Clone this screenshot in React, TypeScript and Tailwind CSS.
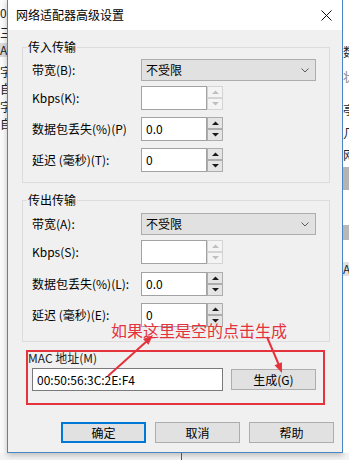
import React from "react";

const RED = "#e4333d";

function Arrow({ dir, disabled }: { dir: "up" | "down"; disabled?: boolean }) {
  const pts = dir === "up" ? "0,4 3.5,0.5 7,4" : "0,0 3.5,3.5 7,0";
  return (
    <svg width="7" height="4" viewBox="0 0 7 4">
      <polygon points={pts} fill={disabled ? "#bfbfbf" : "#1a1a1a"} />
    </svg>
  );
}

function SpinBox({ value, disabled }: { value: string; disabled?: boolean }) {
  const btn = disabled
    ? "flex-1 flex items-center justify-center bg-[#f4f4f4] border border-[#d4d4d4]"
    : "flex-1 flex items-center justify-center bg-[#e5e5e5] border border-[#adadad]";
  return (
    <div className="flex h-[24px] w-[82px]">
      <div className="w-[66px] h-full bg-white border border-[#a2a2a2] flex items-center pl-[4px] text-[12px] leading-[14px] text-black">
        {value}
      </div>
      <div className="w-[16px] h-full flex flex-col">
        <div className={btn}>
          <Arrow dir="up" disabled={disabled} />
        </div>
        <div className={btn}>
          <Arrow dir="down" disabled={disabled} />
        </div>
      </div>
    </div>
  );
}

function Select() {
  return (
    <div className="h-[22px] w-[175px] bg-[#e1e1e1] border border-[#adadad] flex items-center justify-between pl-[4px] pr-[6px]">
      <span className="text-[12px] leading-[14px] text-black">不受限</span>
      <svg width="8" height="5" viewBox="0 0 8 5">
        <polyline points="0.5,0.5 4,4 7.5,0.5" fill="none" stroke="#5a5a5a" strokeWidth="1" />
      </svg>
    </div>
  );
}

function Row({ label, children, mt }: { label: string; children: React.ReactNode; mt: string }) {
  return (
    <div className={`flex items-center ${mt}`}>
      <span className="w-[109px] text-[12px] leading-[14px] text-black whitespace-nowrap">{label}</span>
      {children}
    </div>
  );
}

function Button({ label, primary, w }: { label: string; primary?: boolean; w: string }) {
  return (
    <div
      className={`${w} h-[21px] flex items-center justify-center bg-[#e1e1e1] text-[12px] leading-[14px] text-black ${
        primary ? "border-2 border-[#0078d7]" : "border border-[#adadad]"
      }`}
    >
      {label}
    </div>
  );
}

export default function App() {
  return (
    <div className="relative w-[349px] h-[460px] overflow-hidden bg-white font-['Noto_Sans_CJK_SC',sans-serif] text-black">
      <div className="flex h-[453px]">
        {/* desktop behind, left */}
        <div className="w-[7px] h-full bg-[#fbfbfb] overflow-hidden text-[12px] leading-[14px] text-[#222] whitespace-nowrap">
          <div className="h-[14px] mt-[6px]">0</div>
          <div className="h-[14px] mt-[6px]">三</div>
          <div className="h-[14px] mt-[3px] bg-[#dadada]">A</div>
          <div className="h-[14px] mt-[8px]">字</div>
          <div className="h-[14px] mt-[3px]">自</div>
          <div className="h-[14px] mt-[4px]">字</div>
          <div className="h-[14px] mt-[3px]">自</div>
        </div>

        {/* dialog */}
        <div className="w-[336px] h-full flex flex-col bg-[#f0f0f0] border-x border-b border-[#4a86c5] shadow-[0_2px_6px_rgba(0,0,0,0.25)]">
          <div className="h-[30px] bg-white flex items-center justify-between pl-[8px] pr-[10px]">
            <span className="text-[12px] leading-[14px]">网络适配器高级设置</span>
            <svg width="11" height="11" viewBox="0 0 11 11">
              <path d="M0.5 0.5 L10.5 10.5 M10.5 0.5 L0.5 10.5" stroke="#111" strokeWidth="1" />
            </svg>
          </div>

          <div className="flex flex-col pl-[14px] pr-[12px] pt-[10px]">
            <fieldset className="border border-[#dcdcdc] pl-[9px] pr-[12px] pt-[5px] pb-[10px]">
              <legend className="-ml-[5px] px-[1px] text-[12px] leading-[14px]">传入传输</legend>
              <Row label="带宽(B):" mt="mt-0">
                <Select />
              </Row>
              <Row label="Kbps(K):" mt="mt-[5px]">
                <SpinBox value="" disabled />
              </Row>
              <Row label="数据包丢失(%)(P)" mt="mt-[7px]">
                <SpinBox value="0.0" />
              </Row>
              <Row label="延迟 (毫秒)(T):" mt="mt-[7px]">
                <SpinBox value="0" />
              </Row>
            </fieldset>

            <fieldset className="mt-[10px] border border-[#dcdcdc] pl-[9px] pr-[12px] pt-[6px] pb-[14px]">
              <legend className="-ml-[5px] px-[1px] text-[12px] leading-[14px]">传出传输</legend>
              <Row label="带宽(A):" mt="mt-0">
                <Select />
              </Row>
              <Row label="Kbps(S):" mt="mt-[5px]">
                <SpinBox value="" disabled />
              </Row>
              <Row label="数据包丢失(%)(L):" mt="mt-[8px]">
                <SpinBox value="0.0" />
              </Row>
              <Row label="延迟 (毫秒)(E):" mt="mt-[7px]">
                <SpinBox value="0" />
              </Row>
            </fieldset>

            {/* MAC group, outlined in red */}
            <div className="mt-[8px] ml-[4px] w-[299px] border-2 border-[#e4333d] flex flex-col pb-[12px]">
              <span className="text-[12px] leading-[12px] text-[#222]">MAC 地址(M)</span>
              <div className="mt-[4px] ml-[4px] flex items-center">
                <div className="w-[191px] h-[23px] bg-white border border-[#7a7a7a] flex items-center pl-[4px] text-[12px] leading-[14px]">
                  00:50:56:3C:2E:F4
                </div>
                <div className="ml-[8px]">
                  <Button label="生成(G)" w="w-[85px]" />
                </div>
              </div>
            </div>

            <div className="mt-[17px] -mr-[4px] flex justify-end gap-[9px]">
              <Button label="确定" primary w="w-[85px]" />
              <Button label="取消" w="w-[85px]" />
              <Button label="帮助" w="w-[85px]" />
            </div>
          </div>
        </div>

        {/* desktop behind, right */}
        <div className="w-[6px] h-full bg-white overflow-hidden text-[12px] leading-[14px] text-[#222] whitespace-nowrap">
          <div className="h-[14px] mt-[45px]">数</div>
          <div className="h-[14px] mt-[11px] text-[#888]">状</div>
          <div className="h-[14px] mt-[19px]">亭</div>
          <div className="h-[14px] mt-[9px]">几</div>
          <div className="h-[14px] mt-[8px]">网</div>
          <div className="h-[23px] mt-[5px] bg-[#b4b4b4]" />
          <div className="h-[15px] mt-[35px] bg-[#b8b8b8]" />
          <div className="h-[14px] mt-[22px] bg-[#e2e2e2]">A</div>
        </div>
      </div>
      <div className="h-[7px] bg-[#f4f4f4] flex">
        <div className="ml-[181px] w-px h-full bg-[#555]" />
      </div>

      {/* annotation */}
      <div className="absolute left-[111px] top-[321px] text-[16px] leading-[18px] whitespace-nowrap text-[#e4333d]">
        如果这里是空的点击生成
      </div>
      <svg className="absolute inset-0 pointer-events-none" width="349" height="460" viewBox="0 0 349 460">
        <line x1="108" y1="376" x2="147" y2="341" stroke={RED} strokeWidth="2" />
        <polygon points="153,335 148.4,344.7 143,338.9" fill={RED} />
        <line x1="267" y1="337" x2="278.5" y2="364" stroke={RED} strokeWidth="2" />
        <polygon points="282,373 281.9,362.3 274.5,365.3" fill={RED} />
      </svg>
    </div>
  );
}
